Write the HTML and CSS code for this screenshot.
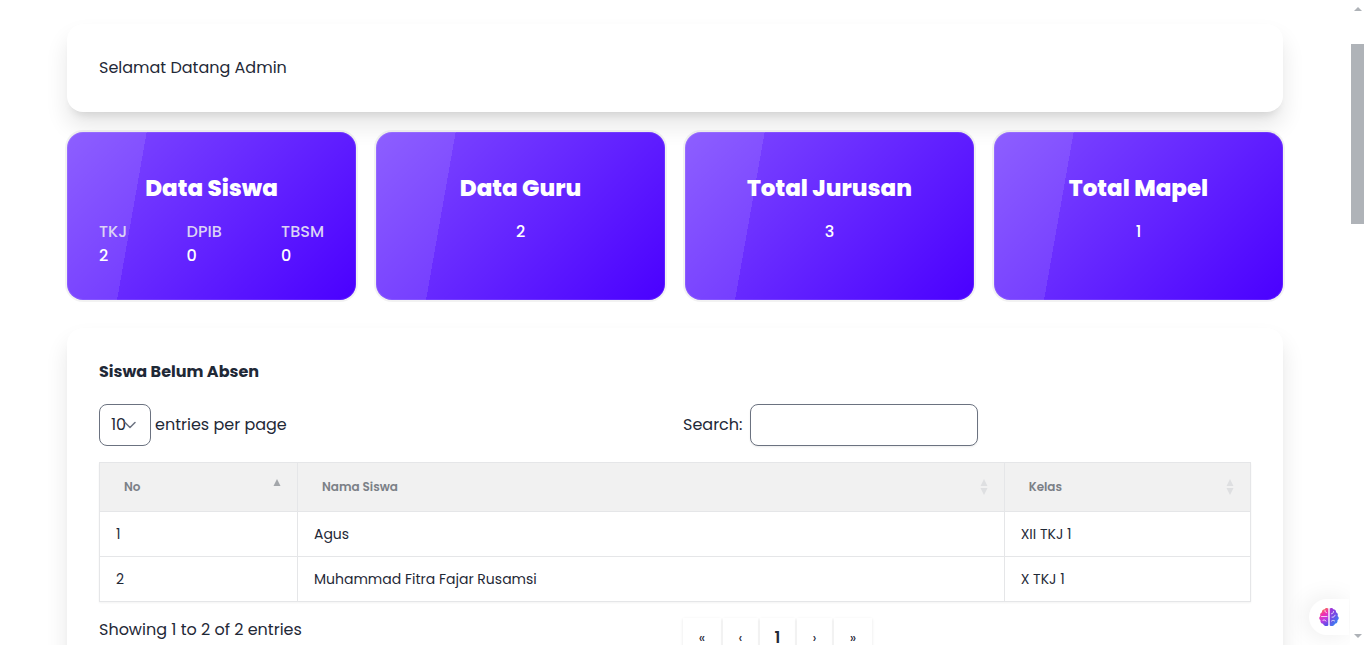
FILE: index.html
```html
<!DOCTYPE html>
<html lang="id">
<head>
<meta charset="utf-8">
<meta name="viewport" content="width=device-width, initial-scale=1">
<title>Dashboard Admin</title>
<link rel="stylesheet" href="styles.css">
</head>
<body>
<div class="window">
  <main class="page">
    <section class="card welcome"><p>Selamat Datang Admin</p></section>

    <section class="stats">
      <article class="stat">
        <h2>Data Siswa</h2>
        <dl class="majors">
          <div><dt>TKJ</dt><dd>2</dd></div>
          <div><dt>DPIB</dt><dd>0</dd></div>
          <div><dt>TBSM</dt><dd>0</dd></div>
        </dl>
      </article>
      <article class="stat"><h2>Data Guru</h2><p>2</p></article>
      <article class="stat"><h2>Total Jurusan</h2><p>3</p></article>
      <article class="stat"><h2>Total Mapel</h2><p>1</p></article>
    </section>

    <section class="card absences">
      <h3>Siswa Belum Absen</h3>
      <div class="row controls">
        <div class="length">
          <span class="select-wrap">
            <select id="length"><option>10</option><option>25</option><option>50</option></select>
            <svg class="chevron" viewBox="0 0 12 8" aria-hidden="true"><path d="M1 1.500l5 5 5-5"/></svg>
          </span>
          <label for="length">entries per page</label>
        </div>
        <div class="search">
          <label for="search">Search:</label>
          <input id="search" type="search">
        </div>
      </div>
      <table>
        <colgroup><col class="col-no"><col class="col-name"><col class="col-class"></colgroup>
        <thead>
          <tr>
            <th scope="col"><div class="head"><span>No</span><svg class="sort asc" viewBox="0 0 8 16" aria-hidden="true"><path d="M4 0l3.500 7h-7z"/></svg></div></th>
            <th scope="col"><div class="head"><span>Nama Siswa</span><svg class="sort" viewBox="0 0 8 16" aria-hidden="true"><path d="M4 0l3.500 7h-7zM.5 9h7L4 16z"/></svg></div></th>
            <th scope="col"><div class="head"><span>Kelas</span><svg class="sort" viewBox="0 0 8 16" aria-hidden="true"><path d="M4 0l3.500 7h-7zM.5 9h7L4 16z"/></svg></div></th>
          </tr>
        </thead>
        <tbody>
          <tr><td>1</td><td>Agus</td><td>XII TKJ 1</td></tr>
          <tr><td>2</td><td>Muhammad Fitra Fajar Rusamsi</td><td>X TKJ 1</td></tr>
        </tbody>
      </table>
      <div class="row footer">
        <p>Showing 1 to 2 of 2 entries</p>
        <nav class="pager" aria-label="Pagination">
          <button type="button">«</button>
          <button type="button">‹</button>
          <button type="button" class="current">1</button>
          <button type="button">›</button>
          <button type="button">»</button>
        </nav>
      </div>
    </section>
  </main>

  <button type="button" class="assistant" aria-label="Assistant">
    <svg viewBox="0 0 20 20" aria-hidden="true">
      <defs>
        <linearGradient id="left" x1="0.3" y1="0" x2="0.6" y2="1"><stop offset="0" stop-color="#f58a3c"/><stop offset=".35" stop-color="#f22fae"/><stop offset=".65" stop-color="#c03be0"/><stop offset="1" stop-color="#5b4fe8"/></linearGradient>
        <linearGradient id="right" x1="0.2" y1="0" x2="0.8" y2="1"><stop offset="0" stop-color="#a435d8"/><stop offset=".5" stop-color="#6951e8"/><stop offset="1" stop-color="#2996f5"/></linearGradient>
      </defs>
      <path fill="url(#left)" d="M9.300 1.500C8.300.5 6.200.9 5.700 2.200 3.900 2.200 2.600 3.700 3 5.300 1.300 6 .8 7.600 1.400 8.900-.3 10 0 12.300 1.500 13.200c-.4 1.900.8 3.400 2.500 3.500.7 2.300 4 3.200 5.300 1.500z"/>
      <path fill="url(#right)" d="M10.700 1.500c1-1 3.100-.6 3.600.7 1.800 0 3.100 1.500 2.700 3.100 1.700.7 2.200 2.300 1.600 3.600 1.700 1.100 1.400 3.400-.1 4.300.4 1.900-.8 3.400-2.500 3.500-.7 2.300-4 3.200-5.300 1.500z"/>
      <path fill="none" stroke="#fff" stroke-opacity=".75" stroke-linecap="round" d="M2.500 9.500h5.500M6 3.500c-.2 1.300.5 2 1.500 2.200M4 13.300c1.300-.7 2.600-.3 3 .8M14.500 4.500c0 1.500-.8 2.200-2 2.300M13 10.200c1.800.2 2.800-.7 3-2M12.500 14c1.200-1 2.500-.8 3.200 0"/>
    </svg>
  </button>

  <div class="scrollbar" aria-hidden="true">
    <svg viewBox="0 0 8 4"><path d="M4 0l4 4H0z"/></svg>
    <div class="track"><div class="thumb"></div></div>
    <svg viewBox="0 0 8 4"><path d="M0 0h8L4 4z"/></svg>
  </div>
</div>
</body>
</html>
```
FILE: styles.css
```css
*, *::before, *::after { box-sizing: border-box; }

body {
  margin: 0;
  background: #fff;
  color: #1f2937;
  font: 400 16px/24px Poppins, Inter, "Open Sans", sans-serif;
}

h2, h3, p, dl, dd { margin: 0; }

button, input, select { font: inherit; color: inherit; }

.window {
  position: relative;
  display: grid;
  grid-template-columns: minmax(0, 1fr) 16px;
  height: 100vh;
  overflow: hidden;
}

.page {
  padding: 24px 67px 0;
  overflow: hidden;
}

.card {
  padding: 32px;
  border-radius: 16px;
  background: #fff;
  box-shadow: 0 8px 10px -6px rgb(0 0 0 / 0.12), 0 14px 22px 1px rgb(0 0 0 / 0.09);
}

.stats {
  display: grid;
  grid-template-columns: repeat(4, minmax(0, 1fr));
  gap: 20px;
  margin: 20px 0 28px;
}

.stat {
  min-height: 168px;
  padding: 40px 32px 32px;
  border-radius: 16px;
  background-color: #4a00ff;
  background-image:
    linear-gradient(135deg, rgb(255 255 255 / 0.3) 0%, rgb(0 0 0 / 0) 100%),
    linear-gradient(100deg, rgb(255 255 255 / 0.1) 25%, rgb(0 0 0 / 0) 25%);
  box-shadow: inset 0 0 0 1px rgb(255 255 255 / 0.1), 0 0 0 2px rgb(0 0 0 / 0.05);
  color: #fff;
  font-weight: 500;
  text-align: center;
}

.stat h2 {
  margin-bottom: 16px;
  font-size: 23px;
  font-weight: 800;
  line-height: 32px;
}

.majors {
  display: flex;
  justify-content: space-between;
  text-align: left;
}

.majors dt { color: #dbd3f5; }

.absences h3 { margin-bottom: 20px; font-size: 16px; font-weight: 700; }

.row {
  display: grid;
  grid-template-columns: repeat(2, minmax(0, 1fr));
  gap: 16px;
}

.controls { margin-bottom: 16px; }

.length { display: flex; align-items: center; gap: 4px; }

.select-wrap { display: grid; align-items: center; width: 52px; }

.select-wrap > * { grid-area: 1 / 1; }

.select-wrap select {
  appearance: none;
  width: 100%;
  height: 42px;
  padding: 0 11px;
  border: 1px solid #6b7280;
  border-radius: 8px;
  background: #fff;
}

.chevron {
  justify-self: end;
  width: 12px;
  height: 8px;
  margin-right: 15px;
  fill: none;
  stroke: #6b7280;
  stroke-width: 1.5;
  stroke-linecap: round;
  stroke-linejoin: round;
  pointer-events: none;
}

.search { display: flex; align-items: center; gap: 8px; }

.search input {
  width: 228px;
  height: 42px;
  padding: 8px 12px;
  border: 1px solid #6b7280;
  border-radius: 8px;
  background: #fff;
  box-shadow: 0 1px 2px rgb(0 0 0 / 0.08);
}

table {
  width: 100%;
  margin-bottom: 16px;
  border-collapse: collapse;
  table-layout: fixed;
  box-shadow: 0 1px 2px rgb(0 0 0 / 0.05);
  font-size: 14px;
  line-height: 20px;
}

.col-no { width: 17.2%; }
.col-name { width: 61.4%; }
.col-class { width: 21.4%; }

th, td { border: 1px solid #e5e6e8; text-align: left; }

th {
  padding: 16px 16px 16px 24px;
  background: #f1f1f1;
  color: #7b8087;
  font-size: 12px;
  font-weight: 600;
  line-height: 16px;
}

td { padding: 12px 16px; }

.head { display: flex; align-items: center; justify-content: space-between; }

.sort { width: 8px; height: 16px; fill: #dedfe1; }

.sort.asc { fill: #a3a6aa; }

.pager { display: flex; gap: 2px; }

.pager button {
  min-width: 35px;
  height: 40px;
  padding: 0 12px;
  border: 0;
  background: #fff;
  box-shadow: 0 1px 3px rgb(0 0 0 / 0.1);
  font-size: 14px;
}

.pager button:first-child, .pager button:last-child { min-width: 38px; }

.pager .current { font-size: 16px; font-weight: 600; }

.assistant {
  position: absolute;
  right: 17px;
  bottom: 10px;
  display: flex;
  align-items: center;
  width: 40px;
  height: 36px;
  padding: 0 10px;
  border: 0;
  border-radius: 18px 0 0 18px;
  background: #fff;
  box-shadow: -4px 0 24px rgb(0 0 0 / 0.08);
}

.assistant svg { flex: none; width: 20px; height: 20px; }

.scrollbar {
  position: relative;
  display: flex;
  flex-direction: column;
  align-items: center;
  padding: 7px 0;
  background: #fff;
}

.scrollbar svg { width: 8px; height: 4px; fill: #aeb2b7; }

.track { flex: 1; align-self: stretch; padding: 33px 2px 0 1px; }

.thumb { height: 180px; background: #afb3b8; }
```
